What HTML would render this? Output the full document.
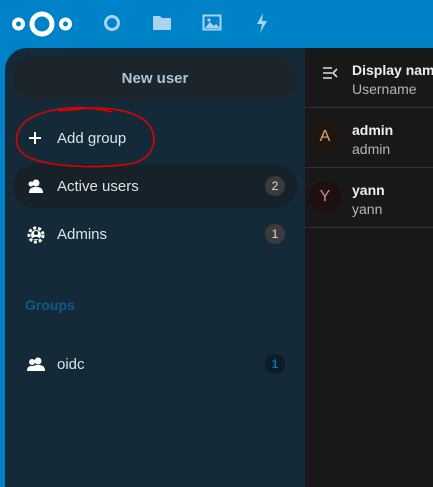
<!DOCTYPE html>
<html><head><style>
*{margin:0;padding:0;box-sizing:border-box}
body{width:433px;height:487px;background:#0082c9;font-family:"Liberation Sans",sans-serif;position:relative;overflow:hidden}
.side{position:absolute;left:5px;top:48px;width:300px;height:439px;background:#142a38;border-top-left-radius:22px}
.main{position:absolute;left:305px;top:48px;width:128px;height:439px;background:#181818}
.btn{position:absolute;left:13px;top:56px;width:284px;height:44px;background:#1c252b;border-radius:22px;color:#a9c6da;font-weight:bold;font-size:15px;text-align:center;line-height:46px}
.row{position:absolute;left:13px;width:284px;height:44px;border-radius:22px;color:#dde3e7;font-size:15px;line-height:46px}
.row span.t{position:absolute;left:44px}
.row svg{position:absolute;left:14px;top:14px}
.cnt{position:absolute;right:12px;top:12px;width:20px;height:20px;border-radius:10px;background:#3b3b3b;color:#ddd;font-size:12px;line-height:20px;text-align:center}
.grp{position:absolute;left:25px;top:297px;color:#0c5a8a;font-weight:bold;font-size:14px}
.hd{position:absolute;left:352px;color:#eee;font-weight:bold;font-size:14px;white-space:nowrap}
.sb{position:absolute;left:352px;color:#b5b5b5;font-size:14px}
.sep{position:absolute;left:305px;width:128px;height:1px;background:#333}
.av{position:absolute;left:309px;width:32px;height:32px;border-radius:16px;text-align:center;line-height:32px;font-size:16px}
</style></head><body>
<svg style="position:absolute;left:11px;top:9px" width="62" height="30"><circle cx="7.5" cy="15" r="4.5" fill="none" stroke="#fff" stroke-width="4"/><circle cx="31" cy="15" r="10" fill="none" stroke="#fff" stroke-width="5"/><circle cx="54.5" cy="15" r="4.5" fill="none" stroke="#fff" stroke-width="4"/></svg>
<svg style="position:absolute;left:102px;top:13px" width="20" height="20"><circle cx="10" cy="10" r="6.5" fill="none" stroke="#a8d4ef" stroke-width="3"/></svg>
<svg style="position:absolute;left:152px;top:14px" width="20" height="18"><path d="M1 2h7l2 2h9v12H1z" fill="#a8d4ef"/></svg>
<svg style="position:absolute;left:202px;top:14px" width="20" height="18"><rect x="1.5" y="1.5" width="17" height="14" fill="none" stroke="#a8d4ef" stroke-width="2"/><path d="M3 14l5-6 4 4 2-2 4 4z" fill="#a8d4ef"/><circle cx="7" cy="6" r="1.6" fill="#a8d4ef"/></svg>
<svg style="position:absolute;left:254px;top:12px" width="16" height="22"><path d="M9 1L3 12h5l-2 9 7-12H8z" fill="#a8d4ef"/></svg>
<div class="side"></div>
<div class="main"></div>
<div class="btn">New user</div>
<div class="row" style="top:116px"><svg width="16" height="16"><path d="M8 2v12M2 8h12" stroke="#fff" stroke-width="2"/></svg><span class="t">Add group</span></div>
<div class="row" style="top:164px;background:#162129"><svg width="18" height="16"><circle cx="9" cy="5" r="3.5" fill="#fff"/><path d="M2 15c0-5 3-6 7-6s7 1 7 6z" fill="#fff"/><circle cx="4" cy="6" r="2.5" fill="#fff"/></svg><span class="t">Active users</span><div class="cnt">2</div></div>
<div class="row" style="top:212px"><svg width="18" height="18"><circle cx="9" cy="9" r="7" fill="none" stroke="#fff" stroke-width="3" stroke-dasharray="3 2"/><circle cx="9" cy="9" r="5" fill="#fff"/><circle cx="9" cy="7" r="2" fill="#142a38"/><path d="M5.5 13c0-3 7-3 7 0z" fill="#142a38"/></svg><span class="t">Admins</span><div class="cnt">1</div></div>
<div class="grp">Groups</div>
<div class="row" style="top:342px"><svg width="18" height="16"><circle cx="11" cy="5" r="3.5" fill="#fff"/><path d="M4 15c0-5 3-6 7-6s7 1 7 6z" fill="#fff"/><circle cx="5" cy="6" r="3" fill="#fff"/><path d="M0 15c0-4 2-5 5-5s4 1 4 5z" fill="#fff"/></svg><span class="t">oidc</span><div class="cnt" style="background:#0e1c25;color:#0a72b0;font-weight:bold">1</div></div>
<svg style="position:absolute;left:0;top:0" width="433" height="487"><path d="M112 112C80 104 50 108 30 118C12 130 12 150 30 158C55 168 100 168 130 164C150 160 158 145 152 130C145 114 120 108 95 108C80 108 62 112 58 110" fill="none" stroke="#e10000" stroke-width="1.6"/></svg>
<svg style="position:absolute;left:322px;top:66px" width="16" height="14"><path d="M1 2h9M1 7h9M1 12h9M15 3l-4 4 4 4" fill="none" stroke="#ddd" stroke-width="1.6"/></svg>
<div class="hd" style="top:62px">Display nam</div><div class="sb" style="top:81px">Username</div>
<div class="sep" style="top:107px"></div>
<div class="av" style="top:121px;background:#1e1610;color:#d7a57a">A</div>
<div class="hd" style="top:122px">admin</div><div class="sb" style="top:141px">admin</div>
<div class="sep" style="top:167px"></div>
<div class="av" style="top:181px;background:#1e1010;color:#d28b80">Y</div>
<div class="hd" style="top:182px">yann</div><div class="sb" style="top:201px">yann</div>
<div class="sep" style="top:227px"></div>
</body></html>
